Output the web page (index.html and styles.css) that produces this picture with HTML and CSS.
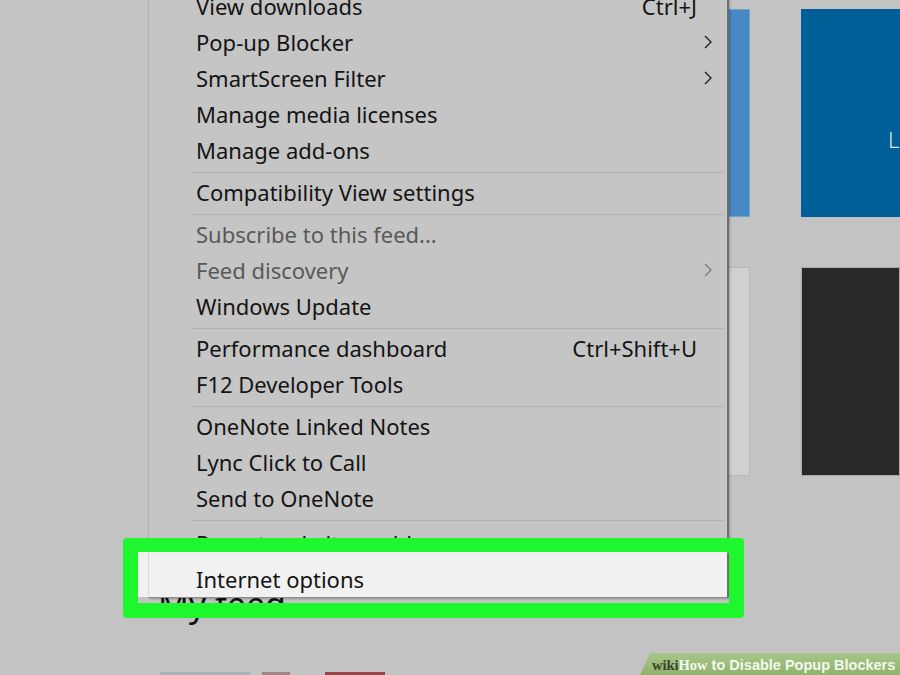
FILE: index.html
```html
<!DOCTYPE html>
<html lang="en">
<head>
<meta charset="utf-8">
<title>Internet options</title>
<link rel="stylesheet" href="styles.css">
</head>
<body>
<div class="screen">
  <div class="page">
    <div class="tile tile-blue-light"></div>
    <div class="tile tile-blue">L</div>
    <div class="tile tile-gray"></div>
    <div class="tile tile-dark"></div>
    <div class="lower">
      <h2 class="feed-title">My feed</h2>
      <div class="thumbs"></div>
    </div>
  </div>

  <div class="menu">
    <div class="item"><span class="label">View downloads</span><span class="key">Ctrl+J</span><span class="sub"></span></div>
    <div class="item"><span class="label">Pop-up Blocker</span><span class="sub"><svg class="chev" viewBox="0 0 8 14" width="8" height="14"><polyline points="1,1 7,7 1,13"/></svg></span></div>
    <div class="item"><span class="label">SmartScreen Filter</span><span class="sub"><svg class="chev" viewBox="0 0 8 14" width="8" height="14"><polyline points="1,1 7,7 1,13"/></svg></span></div>
    <div class="item"><span class="label">Manage media licenses</span><span class="sub"></span></div>
    <div class="item"><span class="label">Manage add-ons</span><span class="sub"></span></div>
    <div class="sep"></div>
    <div class="item"><span class="label">Compatibility View settings</span><span class="sub"></span></div>
    <div class="sep"></div>
    <div class="item disabled"><span class="label">Subscribe to this feed...</span><span class="sub"></span></div>
    <div class="item disabled"><span class="label">Feed discovery</span><span class="sub"><svg class="chev" viewBox="0 0 8 14" width="8" height="14"><polyline points="1,1 7,7 1,13"/></svg></span></div>
    <div class="item"><span class="label">Windows Update</span><span class="sub"></span></div>
    <div class="sep"></div>
    <div class="item"><span class="label">Performance dashboard</span><span class="key">Ctrl+Shift+U</span><span class="sub"></span></div>
    <div class="item"><span class="label">F12 Developer Tools</span><span class="sub"></span></div>
    <div class="sep"></div>
    <div class="item"><span class="label">OneNote Linked Notes</span><span class="sub"></span></div>
    <div class="item"><span class="label">Lync Click to Call</span><span class="sub"></span></div>
    <div class="item"><span class="label">Send to OneNote</span><span class="sub"></span></div>
    <div class="sep"></div>
    <div class="item report"><span class="label">Report website problems</span><span class="sub"></span></div>
    <div class="item active"><span class="label">Internet options</span><span class="sub"></span></div>
  </div>

  <div class="callout"></div>

  <div class="watermark"><span class="wm-wiki">wiki</span><span class="wm-how">How</span><span class="wm-title"> to Disable Popup Blockers</span></div>
</div>
</body>
</html>
```

FILE: styles.css
```css
* { box-sizing: border-box; }

html, body {
  margin: 0;
  padding: 0;
}

body {
  width: 900px;
  height: 675px;
  overflow: hidden;
  background: #c3c3c3;
  font-family: "Noto Sans", "Open Sans", sans-serif;
}

.screen {
  position: relative;
  width: 900px;
  height: 675px;
  overflow: hidden;
}

/* background page */
.page {
  display: grid;
  grid-template-columns: 560px 190px 51px 99px;
  grid-template-rows: 9px 208px 50px 209px 199px;
  height: 675px;
}

.tile { min-width: 0; }

.tile-blue-light {
  grid-column: 2;
  grid-row: 2;
  background: #4789c4;
  border: 1px solid #6ea2d1;
}

.tile-blue {
  grid-column: 4;
  grid-row: 2;
  background: #015f98;
  color: #d9e6ef;
  font-size: 22px;
  font-weight: 300;
  padding: 117px 0 0 87px;
  line-height: 26px;
}

.tile-gray {
  grid-column: 2;
  grid-row: 4;
  background: #d0d0d0;
  border: 1px solid #b8b8b8;
}

.tile-dark {
  grid-column: 4;
  grid-row: 4;
  background: #282828;
  border: 1px solid #a9a9a9;
}

.lower {
  grid-column: 1 / -1;
  grid-row: 5;
  display: flex;
  flex-direction: column;
}

.feed-title {
  margin: 108px 0 0 158px;
  font-size: 34px;
  line-height: 40px;
  font-weight: 400;
  color: #111;
}

.thumbs {
  margin-top: auto;
  height: 3px;
  background: linear-gradient(90deg,
    transparent 0 160px,
    #aeafb8 160px 250px,
    transparent 250px 262px,
    #a88484 262px 290px,
    transparent 290px 325px,
    #954545 325px 385px,
    transparent 385px);
}

/* context menu */
.menu {
  position: absolute;
  left: 148px;
  top: -10px;
  width: 581px;
  background: #c5c5c5;
  border-left: 1px solid #b2b2b2;
  border-right: 2px solid #6f6f6f;
  border-bottom: 1px solid #8d8d8d;
  box-shadow: 1px 1px 2px rgba(0, 0, 0, 0.25);
}

.item {
  display: flex;
  align-items: center;
  height: 36px;
  padding-left: 47px;
  padding-bottom: 4px;
  font-size: 22px;
  color: #141414;
  white-space: nowrap;
}

.item .label { flex: 1; }

.item .key {
  color: #141414;
}

.item .sub {
  width: 30px;
  display: flex;
  align-items: center;
  padding-left: 7px;
}

.chev {
  fill: none;
  stroke: #1a1a1a;
  stroke-width: 1.3;
}

.item.disabled { color: #595959; }
.item.disabled .chev { stroke: #7a7a7a; }

.item.report {
  padding-bottom: 0;
  padding-top: 2px;
}

.sep {
  height: 1px;
  margin: 2px 3px 3px 43px;
  background: #b3b3b3;
}

.item.active {
  position: relative;
  z-index: 1;
  height: 45px;
  margin-top: -8px;
  margin-left: -11px;
  padding-left: 58px;
  padding-top: 9px;
  padding-bottom: 0;
  background: linear-gradient(90deg, #f1f1f1 0 10px, #dadada 10px 11px, #f1f1f1 11px);
}

/* annotation frame */
.callout {
  position: absolute;
  left: 123px;
  top: 538px;
  width: 621px;
  height: 80px;
  border: 15px solid #1ef62e;
  border-radius: 4px;
}

/* watermark */
.watermark {
  position: absolute;
  right: 0;
  bottom: 0;
  width: 260px;
  height: 22px;
  padding-left: 12px;
  background: linear-gradient(#a7c689, #8fb26d);
  clip-path: polygon(10px 0, 100% 0, 100% 100%, 0 100%);
  font-size: 14.5px;
  line-height: 23px;
  font-weight: 700;
  white-space: nowrap;
}

.wm-wiki {
  font-family: "Liberation Serif", serif;
  color: #3b4233;
}

.wm-how {
  font-family: "Liberation Serif", serif;
  color: #f4f8ee;
}

.wm-title {
  font-family: "Liberation Sans", sans-serif;
  color: #f4f8ee;
}
```
